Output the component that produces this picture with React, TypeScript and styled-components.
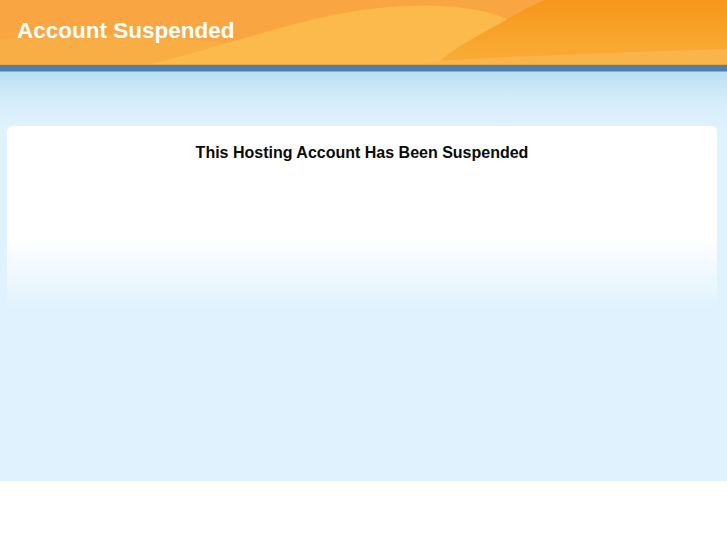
import React from 'react';
import styled, { createGlobalStyle } from 'styled-components';

const GlobalStyle = createGlobalStyle`
  html, body {
    margin: 0;
    padding: 0;
    background: #ffffff;
    font-family: 'Liberation Sans', Arial, sans-serif;
  }
`;

const Page = styled.div`
  height: 481px;
  background: #dff2fd;
  display: flex;
  flex-direction: column;
`;

const Header = styled.header`
  position: relative;
  height: 65px;
  overflow: hidden;
  background: #f9a642;
  display: flex;
  align-items: center;
  padding-left: 17px;
  border-bottom: 1px solid #e9a440;
  box-sizing: border-box;
`;

const Waves = styled.svg`
  position: absolute;
  inset: 0;
  width: 100%;
  height: 100%;
`;

const Title = styled.h1`
  position: relative;
  margin: 0 0 2px;
  font-size: 22.5px;
  font-weight: bold;
  color: #ffffff;
`;

const Band = styled.div`
  height: 6px;
  background: #4f80ae;
  border-bottom: 1px solid #7fb3d6;
`;

const Sky = styled.main`
  flex: 1;
  padding: 54px 10px 0 7px;
  background: linear-gradient(180deg, #b8dff2 0px, #d2ecf9 25px, #dff2fd 55px, #dff2fd 100%);
`;

const Card = styled.section`
  height: 186px;
  border-radius: 6px 6px 0 0;
  padding-top: 18px;
  box-sizing: border-box;
  background: linear-gradient(180deg, #ffffff 0%, #ffffff 60%, #eef8fe 80%, #dff2fd 100%);
  text-align: center;
`;

const Heading = styled.h2`
  margin: 0;
  font-size: 16px;
  font-weight: bold;
  color: #0a0a0a;
`;

const App: React.FC = () => (
  <>
    <GlobalStyle />
    <Page>
      <Header>
        <Waves viewBox="0 0 727 65" preserveAspectRatio="none">
          <defs>
            <linearGradient id="dark" x1="0" y1="0" x2="0" y2="1">
              <stop offset="0" stopColor="#f7971b" />
              <stop offset="1" stopColor="#f9ac36" />
            </linearGradient>
          </defs>
          <path d="M0 40 C80 30 160 36 230 44 L230 65 L0 65 Z" fill="#f9ad45" />
          <path
            d="M150 65 C240 44 320 8 410 6 C470 4 500 14 520 26 L520 65 Z"
            fill="#fbba4b"
          />
          <path
            d="M545 0 L727 0 L727 50 C640 52 540 56 440 62 C460 44 490 30 510 18 C525 9 535 4 545 0 Z"
            fill="url(#dark)"
          />
          <path d="M440 62 C540 56 640 52 727 50 L727 65 L420 65 Z" fill="#fab548" />
        </Waves>
        <Title>Account Suspended</Title>
      </Header>
      <Band />
      <Sky>
        <Card>
          <Heading>This Hosting Account Has Been Suspended</Heading>
        </Card>
      </Sky>
    </Page>
  </>
);

export default App;
